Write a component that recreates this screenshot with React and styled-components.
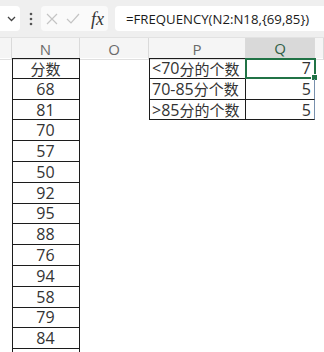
import React from 'react'
import styled, { createGlobalStyle } from 'styled-components'

const GREEN = '#217346'
const LINE = '#1c1c1c'
const COLS = '12px 68px 69px 97px 69px 1fr'

const scores = [68, 81, 70, 57, 50, 92, 95, 88, 76, 94, 58, 79, 84, '']

const tally = [
  { label: '<70分的个数', value: 7 },
  { label: '70-85分个数', value: 5 },
  { label: '>85分的个数', value: 5 },
]

const GlobalStyle = createGlobalStyle`
  html, body {
    margin: 0;
    padding: 0;
    background: #fff;
  }
  body {
    width: 324px;
    height: 352px;
    overflow: hidden;
    font-family: 'Open Sans', 'Noto Sans CJK SC', sans-serif;
    color: #333;
  }
`

const TopBar = styled('div')`
  height: 38px;
  background: #efefef;
  display: flex;
  align-items: center;
  box-sizing: border-box;
  border-bottom: 1px solid #e2e2e2;
`

const NameBox = styled('div')`
  width: 20px;
  height: 25px;
  background: #fff;
  border-radius: 0 4px 4px 0;
  display: flex;
  align-items: center;
  justify-content: flex-end;
  padding-right: 4px;
  box-sizing: border-box;
`

const Grip = styled('div')`
  width: 21px;
  display: flex;
  justify-content: center;
`

const FxBox = styled('div')`
  width: 67px;
  height: 25px;
  background: #fafafa;
  border-radius: 4px;
  display: flex;
  align-items: center;
  padding-left: 5px;
  gap: 8px;
  box-sizing: border-box;
`

const Fx = styled('span')`
  font-family: 'Liberation Serif', serif;
  font-style: italic;
  font-size: 18px;
  color: #333;
  margin-left: 3px;
  line-height: 1;
`

const FormulaBox = styled('div')`
  flex: 1;
  height: 25px;
  margin-left: 7px;
  background: #fff;
  border-radius: 4px 0 0 4px;
  display: flex;
  align-items: center;
  padding-left: 11px;
  font-size: 13.2px;
  color: #1a1a1a;
  white-space: nowrap;
`

const HeaderRow = styled('div')`
  display: grid;
  grid-template-columns: ${COLS};
  height: 20px;
  background: #f5f5f5;
`

const HeaderCell = styled('div')`
  display: flex;
  align-items: center;
  justify-content: center;
  font-size: 15px;
  box-sizing: border-box;
  border-right: 1px solid #dadada;
  color: ${({ $selected }) => ($selected ? '#2f5f45' : '#6a6a6a')};
  background: ${({ $selected }) => ($selected ? '#d9d9d9' : 'transparent')};
  border-bottom: ${({ $selected }) =>
    $selected ? `2px solid ${GREEN}` : '1px solid #e0e0e0'};
`

const Sheet = styled('div')`
  display: grid;
  grid-template-columns: ${COLS};
  grid-auto-rows: 20.8px;
  height: 294px;
  overflow: hidden;
`

const Cell = styled('div')`
  grid-column: ${({ $col }) => $col};
  grid-row: ${({ $row }) => $row};
  display: flex;
  align-items: center;
  justify-content: ${({ $align }) => $align || 'center'};
  padding: 0 3px 0 2px;
  box-sizing: border-box;
  font-size: 16px;
  white-space: nowrap;
  position: relative;
  border-bottom: 1px solid ${LINE};
  border-top: ${({ $top }) => ($top ? `1px solid ${LINE}` : 'none')};
  border-left: ${({ $left }) => ($left ? `1px solid ${LINE}` : 'none')};
  border-right: 1px solid ${({ $edge }) => $edge || LINE};
`

const Cjk = styled('span')`
  font-family: 'Noto Sans CJK SC', sans-serif;
  font-size: 15px;
`

const Selection = styled('div')`
  position: absolute;
  inset: -1px -2px -1px -1px;
  border: 2px solid ${GREEN};
  pointer-events: none;

  &::after {
    content: '';
    position: absolute;
    right: -4px;
    bottom: -4px;
    width: 5px;
    height: 5px;
    background: ${GREEN};
    border: 1px solid #fff;
  }
`

const Label = ({ text }) => {
  const parts = text.split(/([\u4e00-\u9fff]+)/)
  return parts.map((p, i) =>
    /[\u4e00-\u9fff]/.test(p) ? <Cjk key={i}>{p}</Cjk> : <span key={i}>{p}</span>
  )
}

const Chevron = () => (
  <svg width="9" height="6" viewBox="0 0 9 6">
    <path d="M1 1 L4.5 4.5 L8 1" fill="none" stroke="#444" strokeWidth="1.3" />
  </svg>
)

const Dots = () => (
  <svg width="4" height="14" viewBox="0 0 4 14">
    <circle cx="2" cy="2" r="1.3" fill="#555" />
    <circle cx="2" cy="7" r="1.3" fill="#555" />
    <circle cx="2" cy="12" r="1.3" fill="#555" />
  </svg>
)

const Cross = () => (
  <svg width="12" height="12" viewBox="0 0 12 12">
    <path d="M1 1 L11 11 M11 1 L1 11" stroke="#c4c4c4" strokeWidth="1.2" />
  </svg>
)

const Check = () => (
  <svg width="14" height="11" viewBox="0 0 14 11">
    <path d="M1 6 L5 10 L13 1" fill="none" stroke="#c4c4c4" strokeWidth="1.2" />
  </svg>
)

const App = () => (
  <>
    <GlobalStyle />
    <TopBar>
      <NameBox>
        <Chevron />
      </NameBox>
      <Grip>
        <Dots />
      </Grip>
      <FxBox>
        <Cross />
        <Check />
        <Fx>fx</Fx>
      </FxBox>
      <FormulaBox>=FREQUENCY(N2:N18,{'{'}69,85{'}'})</FormulaBox>
    </TopBar>
    <HeaderRow>
      <HeaderCell />
      <HeaderCell>N</HeaderCell>
      <HeaderCell>O</HeaderCell>
      <HeaderCell>P</HeaderCell>
      <HeaderCell $selected>Q</HeaderCell>
      <HeaderCell />
    </HeaderRow>
    <Sheet>
      <Cell $col={2} $row={1} $top $left>
        <Cjk>分数</Cjk>
      </Cell>
      {scores.map((s, i) => (
        <Cell key={i} $col={2} $row={i + 2} $left>
          {s}
        </Cell>
      ))}
      {tally.map((t, i) => (
        <React.Fragment key={t.label}>
          <Cell $col={4} $row={i + 1} $top={i === 0} $left $align="flex-start">
            <Label text={t.label} />
          </Cell>
          <Cell
            $col={5}
            $row={i + 1}
            $top={i === 0}
            $align="flex-end"
            $edge={i === 0 ? LINE : '#7890ad'}
          >
            {t.value}
            {i === 0 && <Selection />}
          </Cell>
        </React.Fragment>
      ))}
    </Sheet>
  </>
)

export default App
